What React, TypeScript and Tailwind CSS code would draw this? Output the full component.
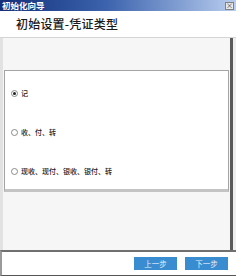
import React from "react";

const font = { fontFamily: '"Noto Sans CJK SC", "Noto Sans", sans-serif' };

function Radio({ checked, label }: { checked?: boolean; label: string }) {
  return (
    <div className="flex items-center h-[10px]">
      <div className="w-[7px] h-[7px] rounded-full border border-[#8a8a8a] bg-white flex items-center justify-center">
        {checked && <div className="w-[3px] h-[3px] rounded-full bg-[#222]" />}
      </div>
      <span className="ml-[3px] text-[7px] leading-[10px] font-medium text-[#1a1a1a]">{label}</span>
    </div>
  );
}

export default function App() {
  return (
    <div className="w-[236px] h-[276px] flex flex-col bg-white overflow-hidden" style={font}>
      {/* title bar */}
      <div className="h-[11px] flex items-center justify-between bg-[linear-gradient(to_right,#13307a,#3c63ad_45%,#b8cdef)] pl-[2px] pr-[2px]">
        <span className="text-[8.5px] leading-[11px] font-bold text-white">初始化向导</span>
        <div className="w-[9px] h-[8px] bg-[#e8e8e8] border border-[#808080] flex items-center justify-center text-[7px] leading-none text-[#333]">
          ×
        </div>
      </div>
      {/* header */}
      <div className="h-[27px] flex items-center pl-[16px] border-b border-[#d4d4d4] bg-white">
        <span className="text-[12px] leading-none font-medium text-[#1a1a1a] tracking-[0.2px]">初始设置-凭证类型</span>
      </div>
      {/* body */}
      <div className="flex-1 flex">
        <div className="flex-1 flex flex-col bg-[#f6f6f6] border-l-[3px] border-[#e2e2e2] pt-[32px] pl-[1px] pr-[1px]">
          <div className="h-[122px] bg-white border border-[#a4a4a4] border-b-[3px] border-b-[#c4c4c4] flex flex-col pl-[6px] pt-[17px] gap-[29px]">
            <Radio checked label="记" />
            <Radio label="收、付、转" />
            <Radio label="现收、现付、银收、银付、转" />
          </div>
        </div>
        <div className="w-[3px] bg-[#5a5a5a]" />
        <div className="w-[3px] bg-[#eeeeee]" />
      </div>
      {/* footer */}
      <div className="h-[26px] flex items-center justify-end gap-[8px] pr-[8px] border-t-[2px] border-[#707070] border-l-[2px] border-l-[#9a9a9a] border-b border-b-[#555] bg-white">
        <div className="w-[43px] h-[13px] bg-[#3a8cd0] flex items-center justify-center text-[7.5px] text-[#e6f0fa] leading-none">
          上一步
        </div>
        <div className="w-[43px] h-[13px] bg-[#3a8cd0] flex items-center justify-center text-[7.5px] text-[#e6f0fa] leading-none">
          下一步
        </div>
      </div>
    </div>
  );
}
